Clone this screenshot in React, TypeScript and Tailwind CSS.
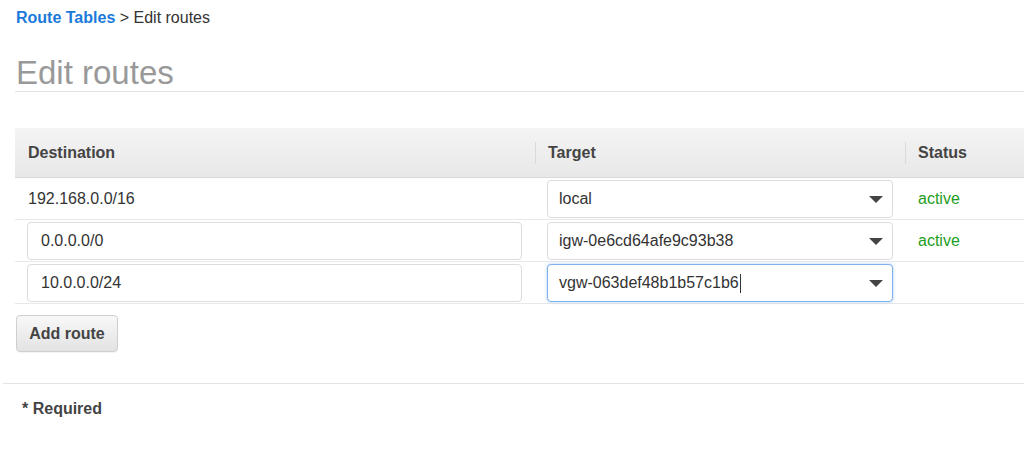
import React from "react";

function Arrow() {
  return (
    <svg width="14" height="7" viewBox="0 0 14 7" className="shrink-0">
      <path d="M0 0 H14 L7 7 Z" fill="#444" />
    </svg>
  );
}

function SelectBox({ value, focused }: { value: string; focused?: boolean }) {
  return (
    <div
      className={
        focused
          ? "flex h-[38px] w-[346px] items-center justify-between rounded-[4px] border border-[#7fb2ec] bg-white pl-[11px] pr-[9px] shadow-[0_0_3px_rgba(82,152,230,0.5)]"
          : "flex h-[38px] w-[346px] items-center justify-between rounded-[4px] border border-[#dcdcdc] bg-white pl-[11px] pr-[9px]"
      }
    >
      <span className="flex items-center text-[16px] text-[#333]">
        {value}
        {focused && <span className="ml-px inline-block h-[19px] w-px bg-[#333]" />}
      </span>
      <Arrow />
    </div>
  );
}

function InputBox({ value }: { value: string }) {
  return (
    <div className="flex h-[38px] w-[495px] items-center rounded-[4px] border border-[#dcdcdc] bg-white pl-[13px] text-[16px] text-[#333]">
      {value}
    </div>
  );
}

export default function App() {
  return (
    <div
      className="min-h-[465px] w-[1024px] overflow-hidden bg-white text-[#333]"
      style={{ fontFamily: '"Liberation Sans", Arial, sans-serif' }}
    >
      <div className="pl-4 pt-[9px] text-[16px] leading-[18px]">
        <span className="font-bold text-[#1b7ad9]">Route Tables</span>
        <span className="text-[#333]"> &gt; Edit routes</span>
      </div>

      <div className="ml-[15px] mt-[27px] border-b border-[#e2e2e2] pl-px text-[33px] leading-[37px] text-[#999999]">
        Edit routes
      </div>

      <div className="ml-[15px] mt-[36px]">
        <div className="flex h-[50px] items-center border-b border-[#d9d9d9] bg-gradient-to-b from-[#f4f4f4] to-[#e8e8e8] pt-px text-[16px] font-bold text-[#444]">
          <div className="w-[520px] pl-[13px]">Destination</div>
          <div className="flex h-[22px] w-[370px] items-center border-l border-[#dadada] pl-[12px]">Target</div>
          <div className="flex h-[22px] flex-1 items-center border-l border-[#dadada] pl-[12px]">Status</div>
        </div>

        <div className="flex h-[42px] items-center border-b border-[#e8e8e8] pt-px text-[16px]">
          <div className="w-[520px] pl-[13px]">192.168.0.0/16</div>
          <div className="w-[370px] pl-[12px]">
            <SelectBox value="local" />
          </div>
          <div className="flex-1 pl-[13px] text-[#1d9d22]">active</div>
        </div>

        <div className="flex h-[42px] items-center border-b border-[#e8e8e8] pt-px text-[16px]">
          <div className="w-[520px] pl-[12px]">
            <InputBox value="0.0.0.0/0" />
          </div>
          <div className="w-[370px] pl-[12px]">
            <SelectBox value="igw-0e6cd64afe9c93b38" />
          </div>
          <div className="flex-1 pl-[13px] text-[#1d9d22]">active</div>
        </div>

        <div className="flex h-[42px] items-center border-b border-[#e8e8e8] pt-px text-[16px]">
          <div className="w-[520px] pl-[12px]">
            <InputBox value="10.0.0.0/24" />
          </div>
          <div className="w-[370px] pl-[12px]">
            <SelectBox value="vgw-063def48b1b57c1b6" focused />
          </div>
          <div className="flex-1" />
        </div>

        <div className="mt-[11px] pl-px">
          <button className="h-[37px] w-[102px] rounded-[4px] border border-[#cfcfcf] bg-gradient-to-b from-[#f8f8f8] to-[#e3e3e3] text-[16px] font-bold text-[#444] shadow-[0_1px_1px_rgba(0,0,0,0.05)]">
            Add route
          </button>
        </div>
      </div>

      <div className="ml-[3px] mt-[31px] border-t border-[#e4e4e4]" />

      <div className="ml-[22px] mt-[16px] text-[16px] font-bold leading-[18px] text-[#444]">* Required</div>
    </div>
  );
}
